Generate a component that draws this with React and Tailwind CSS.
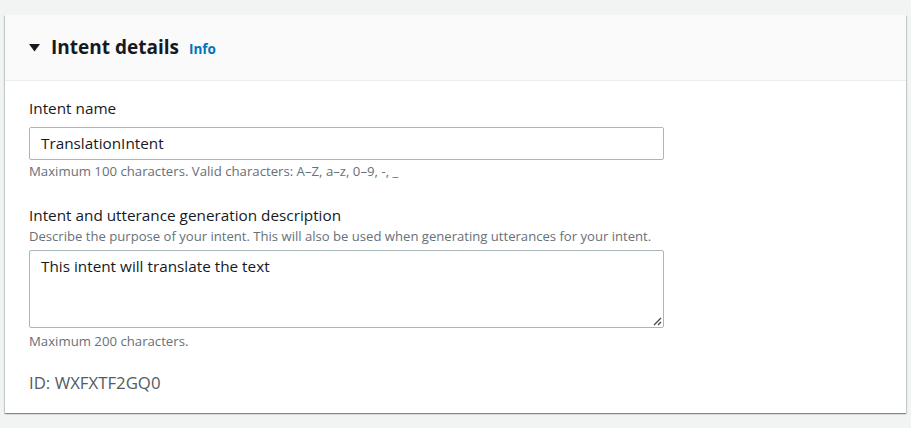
export default function App() {
  return (
    <div className="min-h-[428px] w-[911px] bg-[#f2f3f3] pt-[15px] pl-[5px] pr-[5px] pb-[15px]" style={{ fontFamily: '"Open Sans", "Noto Sans", Arial, sans-serif' }}>
      <div className="bg-white shadow-[0_1px_1px_0_rgba(0,28,36,0.3),1px_1px_1px_0_rgba(0,28,36,0.15),-1px_1px_1px_0_rgba(0,28,36,0.15)]">
        <div className="box-border flex h-[66px] items-center border-b border-[#eaeded] bg-[#fafafa] pl-[24px]">
          <svg width="11" height="8" viewBox="0 0 11 8" className="mr-[11px] mt-[1px]">
            <polygon points="0,0 11,0 5.5,7.5" fill="#16191f" />
          </svg>
          <span className="text-[19px] font-bold text-[#16191f]">Intent details</span>
          <span className="ml-[10px] mt-[3px] text-[13.5px] font-bold text-[#0073bb]">Info</span>
        </div>
        <div className="px-[24px] pt-[16px] pb-[18px]">
          <div className="text-[15.3px] leading-[22px] text-[#16191f]">Intent name</div>
          <div className="mt-[8px] flex h-[33px] w-[635px] items-center rounded-[2px] border border-[#aab7b8] px-[11px] text-[15.3px] text-[#16191f]">
            TranslationIntent
          </div>
          <div className="mt-[2px] text-[13.2px] leading-[18px] text-[#687078]">
            Maximum 100 characters. Valid characters: A–Z, a–z, 0–9, -, _
          </div>
          <div className="mt-[24px] text-[15.3px] leading-[22px] text-[#16191f]">Intent and utterance generation description</div>
          <div className="mt-[1px] text-[13.1px] leading-[18px] text-[#687078]">
            Describe the purpose of your intent. This will also be used when generating utterances for your intent.
          </div>
          <div className="relative mt-[5px] h-[78px] w-[635px] rounded-[2px] border border-[#aab7b8] px-[11px] pt-[4px] text-[15.3px] leading-[22px] text-[#16191f]">
            This intent will translate the text
            <svg width="9" height="9" viewBox="0 0 9 9" className="absolute bottom-[1px] right-[1px]">
              <line x1="8" y1="1" x2="1" y2="8" stroke="#444" strokeWidth="1.2" />
              <line x1="8" y1="5" x2="5" y2="8" stroke="#444" strokeWidth="1.2" />
            </svg>
          </div>
          <div className="mt-[4px] text-[13.2px] leading-[18px] text-[#687078]">Maximum 200 characters.</div>
          <div className="mt-[21px] text-[16.8px] leading-[24px] text-[#545b64]">ID: WXFXTF2GQ0</div>
        </div>
      </div>
    </div>
  );
}
